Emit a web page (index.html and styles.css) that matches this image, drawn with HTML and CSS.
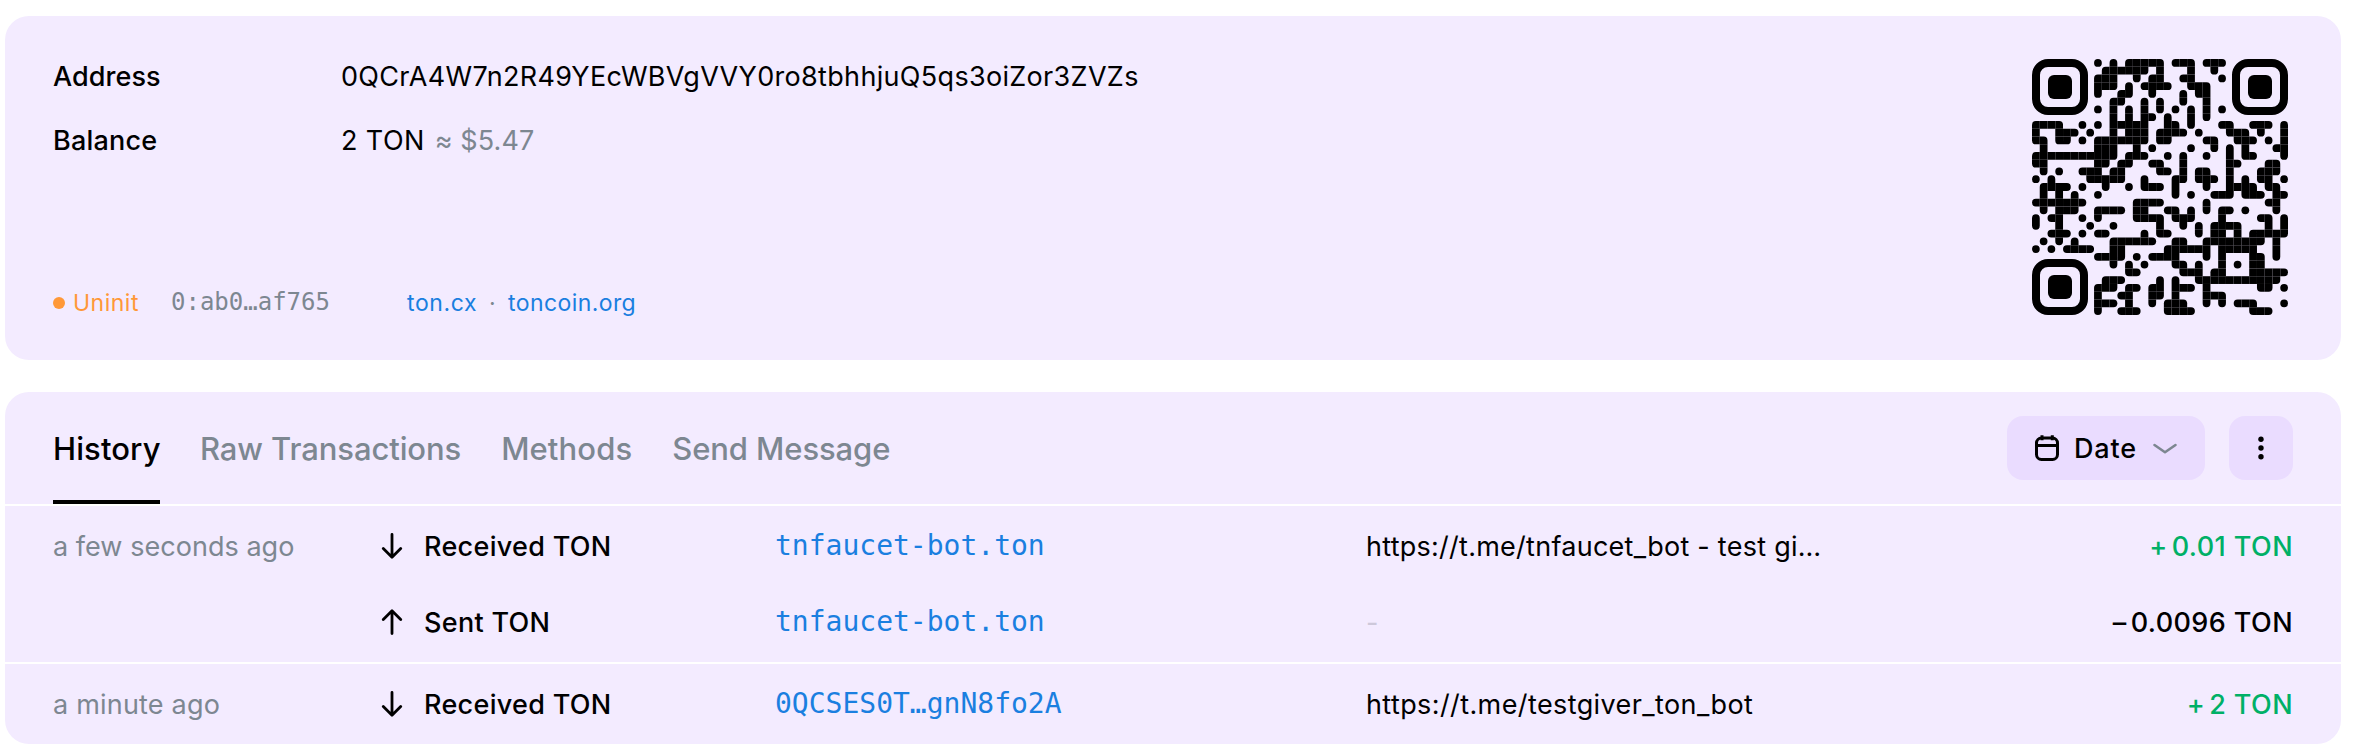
FILE: index.html
```html
<!DOCTYPE html>
<html lang="en">
<head>
<meta charset="utf-8">
<title>Address</title>
<link rel="stylesheet" href="styles.css">
</head>
<body>
<main class="page">
  <section class="card summary">
    <div class="details">
      <dl class="facts">
        <div class="fact"><dt class="fact-name">Address</dt><dd class="fact-value address">0QCrA4W7n2R49YEcWBVgVVY0ro8tbhhjuQ5qs3oiZor3ZVZs</dd></div>
        <div class="fact"><dt class="fact-name balance">Balance</dt><dd class="fact-value"><span class="ton">2 TON</span><span class="fiat">≈ $5.47</span></dd></div>
      </dl>
      <footer class="meta">
        <span class="status"><i class="status-dot"></i>Uninit</span>
        <span class="raw">0:ab0…af765</span>
        <nav class="links"><a class="link tight">ton.cx</a><span class="sep">·</span><a class="link">toncoin.org</a></nav>
      </footer>
    </div>
    <svg class="qr" id="qr" viewBox="0 0 256 256"></svg>
  </section>

  <section class="card history">
    <header class="bar">
      <nav class="tabs">
        <a class="tab active">History</a>
        <a class="tab raw-tab">Raw Transactions</a>
        <a class="tab methods-tab">Methods</a>
        <a class="tab send-tab">Send Message</a>
      </nav>
      <div class="tools">
        <button class="btn date-btn">
          <svg class="ico-cal" viewBox="0 0 26 28" fill="none" stroke="#000" stroke-width="3"><rect x="2.5" y="4" width="21" height="21.5" rx="5"/><path d="M2.5 11.5h21M8 1.2v5M18.3 1.2v5"/></svg>
          <span class="date-label">Date</span>
          <svg class="ico-chev" viewBox="0 0 26 14" fill="none" stroke="#7d8791" stroke-width="2.6" stroke-linecap="round" stroke-linejoin="round"><path d="M2.5 3 13 10.2 23.5 3"/></svg>
        </button>
        <button class="btn more-btn">
          <svg class="ico-more" viewBox="0 0 8 24"><circle cx="4" cy="3.3" r="2.7"/><circle cx="4" cy="12" r="2.7"/><circle cx="4" cy="20.7" r="2.7"/></svg>
        </button>
      </div>
    </header>

    <div class="group">
      <div class="row">
        <span class="time">a few seconds ago</span>
        <span class="action"><svg class="arrow" viewBox="0 0 22 26"><path d="M11 1.5V24M2.3 15.6 11 24.2l8.7-8.6"/></svg>Received TON</span>
        <a class="peer">tnfaucet-bot.ton</a>
        <span class="memo">https://t.me/tnfaucet_bot - test gi…</span>
        <span class="amount in"><span class="sign">+</span>0.01 TON</span>
      </div>
      <div class="row second">
        <span class="time"></span>
        <span class="action"><svg class="arrow" viewBox="0 0 22 26"><path d="M11 24.5V2M2.3 10.4 11 1.8l8.7 8.6"/></svg>Sent TON</span>
        <a class="peer">tnfaucet-bot.ton</a>
        <span class="memo none">-</span>
        <span class="amount"><span class="sign">–</span>0.0096 TON</span>
      </div>
    </div>
    <div class="group">
      <div class="row">
        <span class="time minute">a minute ago</span>
        <span class="action"><svg class="arrow" viewBox="0 0 22 26"><path d="M11 1.5V24M2.3 15.6 11 24.2l8.7-8.6"/></svg>Received TON</span>
        <a class="peer">0QCSES0T…gnN8fo2A</a>
        <span class="memo giver">https://t.me/testgiver_ton_bot</span>
        <span class="amount in"><span class="sign">+</span>2 TON</span>
      </div>
    </div>
  </section>
</main>
<script src="qr.js"></script>
</body>
</html>
```

FILE: styles.css
```css
* { box-sizing: border-box; }
body {
  margin: 0;
  background: #fff;
  color: #000;
  font: 400 27px/36px Inter, "Liberation Sans", sans-serif;
  letter-spacing: .32px;
}
.page { display: flex; flex-direction: column; gap: 32px; padding: 16px 15px 10px 5px; }
.card { background: #f3ebff; border-radius: 24px; overflow: hidden; }

.summary { display: flex; justify-content: space-between; height: 344px; padding: 43px 53px 39px 48px; }
.details { display: flex; flex-direction: column; justify-content: space-between; }
.facts { margin: 0; display: flex; flex-direction: column; gap: 28px; }
.fact { display: grid; grid-template-columns: 288px auto; }
.fact-name { font-weight: 500; letter-spacing: .06px; }
.fact-name.balance { letter-spacing: .2px; }
.fact-value { margin: 0; display: flex; gap: 10px; }
.ton { letter-spacing: .4px; }
.fiat { color: #7d8791; letter-spacing: .1px; }

.meta { display: flex; align-items: center; height: 36px; font-size: 23px; letter-spacing: .5px; }
.status { display: flex; align-items: center; gap: 8px; width: 118px; color: #ff9838; }
.status-dot { width: 12px; height: 12px; border-radius: 50%; background: #ff9838; }
.raw { width: 236px; color: #7d8791; font: 24px/34px "DejaVu Sans Mono", monospace; letter-spacing: 0; margin-top: -2px; }
.links { display: flex; }
.sep { width: 31px; text-align: center; color: #7d8791; }
.link { color: #1a7fe0; letter-spacing: .4px; }
.link.tight { letter-spacing: .6px; }
.qr { width: 256px; height: 256px; }

.bar { display: flex; justify-content: space-between; height: 112px; padding: 0 48px; }
.tabs { display: flex; gap: 40px; font-size: 31px; font-weight: 500; }
.tab { display: flex; align-items: center; color: #7d8791; border-bottom: 4px solid transparent; padding-top: 6px; letter-spacing: -.1px; }
.tab.active { color: #000; border-bottom-color: #000; width: 107px; letter-spacing: .1px; }
.methods-tab { letter-spacing: .12px; }
.tools { display: flex; align-items: center; gap: 24px; }
.btn { display: flex; align-items: center; height: 64px; border: 0; border-radius: 16px; background: #eadcff; padding: 0; font: inherit; color: #000; }
.date-btn { width: 198px; padding: 0 26px 0 27px; font-weight: 500; text-align: left; }
.ico-cal { width: 26px; height: 28px; }
.date-label { width: 77px; margin-left: 14px; margin-right: 1px; padding-top: 2px; letter-spacing: .8px; }
.ico-chev { width: 26px; height: 14px; margin-top: 1px; }
.more-btn { width: 64px; justify-content: center; }
.ico-more { width: 8px; height: 24px; }

.group { border-top: 2px solid #fff; }
.row { display: grid; grid-template-columns: 328px 394px 591px 1fr auto; align-items: center; height: 80px; padding: 2px 48px 0; }
.row.second { height: 76px; padding-bottom: 4px; }
.time { color: #7d8791; letter-spacing: .04px; }
.time.minute { letter-spacing: .2px; }
.action { display: flex; align-items: center; gap: 21px; font-weight: 500; letter-spacing: .3px; }
.arrow { width: 22px; height: 26px; margin-top: -2px; fill: none; stroke: #000; stroke-width: 2.8; stroke-linecap: round; stroke-linejoin: round; }
.peer { color: #1a7fe0; font: 28px/36px "DejaVu Sans Mono", monospace; letter-spacing: 0; margin-top: -2px; }
.memo { letter-spacing: .26px; }
.memo.giver { letter-spacing: .4px; }
.memo.none { color: #cdc8da; }
.amount { display: flex; justify-content: flex-end; font-weight: 500; letter-spacing: .42px; }
.sign { margin-right: 4px; }
.in { color: #00b067; }
```

FILE: qr.js
```js
// Dark modules, listed by column index for each of the 33 rows (finders are drawn apart).
const rows = [
  [8,10,12,13,14,15,16,18,19,20,22,23,24],
  [9,10,11,12,13,14,16,20,23],
  [8,9,10,13,15,16,19,20,24],
  [8,9,10,12,14,15,16,17,20,21,22],
  [8,11,12,15,19,21,22],
  [10,11,14,16,19,22],
  [8,10,12,14,16,18,20,22,24],
  [10,12,14,15,17,20,22],
  [0,1,2,3,6,8,10,11,12,13,14,17,18,20,24,25,28,29,30,32],
  [0,3,4,5,7,10,12,13,14,16,17,18,19,21,25,26,27,29,32],
  [0,1,3,4,6,8,9,10,11,12,13,14,16,17,22,23,26,27,28,30,32],
  [1,8,9,10,13,15,20,23,25,27,31,32],
  [0,1,2,3,4,5,6,7,8,9,10,12,13,14,17,19,22,25,27,28,32],
  [0,1,8,9,11,12,15,16,19,25,26,30,31],
  [1,3,6,7,8,10,11,16,17,19,21,22,25,29,30,31],
  [0,2,7,8,9,10,11,14,18,19,21,22,23,25,27,29,30,32],
  [1,2,3,4,6,9,12,14,15,16,18,22,25,26,27,28,30,31],
  [1,3,5,8,18,20,23,24,25,27,28,29,31,32],
  [0,1,2,3,4,5,6,13,14,15,16,22,30,31],
  [1,3,4,5,8,9,10,11,13,14,17,18,20,22,24,25,27,31],
  [0,2,3,6,8,13,14,15,16,18,19,20,24,29,30,32],
  [0,3,7,10,16,19,21,23,24,25,26,30,32],
  [2,3,4,6,8,9,14,16,17,21,23,24,26,28,29,30,31,32],
  [1,3,5,10,11,12,13,14,15,18,19,22,23,24,25,26,27,28,29,31],
  [0,2,4,5,6,7,10,11,17,18,19,20,21,22,24,25,26,27,28,31],
  [8,9,10,11,13,15,16,17,18,22,24,28,29,31],
  [10,12,14,18,19,21,24,26,28,29],
  [12,13,19,20,21,23,24,28,29,30,31,32],
  [9,10,11,16,18,21,22,23,24,25,26,27,28,29,30,31],
  [8,9,10,12,13,15,16,18,19,20,22,29,30,32],
  [8,11,12,15,16,18,22,23,24],
  [8,9,10,12,15,17,18,19,22,24,26,27,28,32],
  [8,11,12,13,17,18,19,20,28,29,30]
];
const n = 33, m = 256 / n, rad = m / 2;
const on = (r, c) => !!rows[r] && rows[r].includes(c);
let out = '';
rows.forEach((cols, r) => cols.forEach(c => {
  const t = on(r - 1, c), b = on(r + 1, c), l = on(r, c - 1), g = on(r, c + 1);
  const tl = t || l ? 0 : rad, tr = t || g ? 0 : rad, br = b || g ? 0 : rad, bl = b || l ? 0 : rad;
  const x = c * m, y = r * m;
  const arc = (k, dx, dy) => k ? `a${k} ${k} 0 0 1 ${dx * k} ${dy * k}` : '';
  out += `<path d="M${x + tl} ${y}H${x + m - tr}${arc(tr, 1, 1)}V${y + m - br}${arc(br, -1, 1)}H${x + bl}${arc(bl, -1, -1)}V${y + tl}${arc(tl, 1, -1)}z"/>`;
}));
[[0, 0], [200, 0], [0, 200]].forEach(([x, y]) => {
  out += `<rect x="${x + 4}" y="${y + 4}" width="48" height="48" rx="12" fill="none" stroke="#000" stroke-width="8"/>`;
  out += `<rect x="${x + 16}" y="${y + 16}" width="24" height="24" rx="6"/>`;
});
document.getElementById('qr').innerHTML = out;
```
